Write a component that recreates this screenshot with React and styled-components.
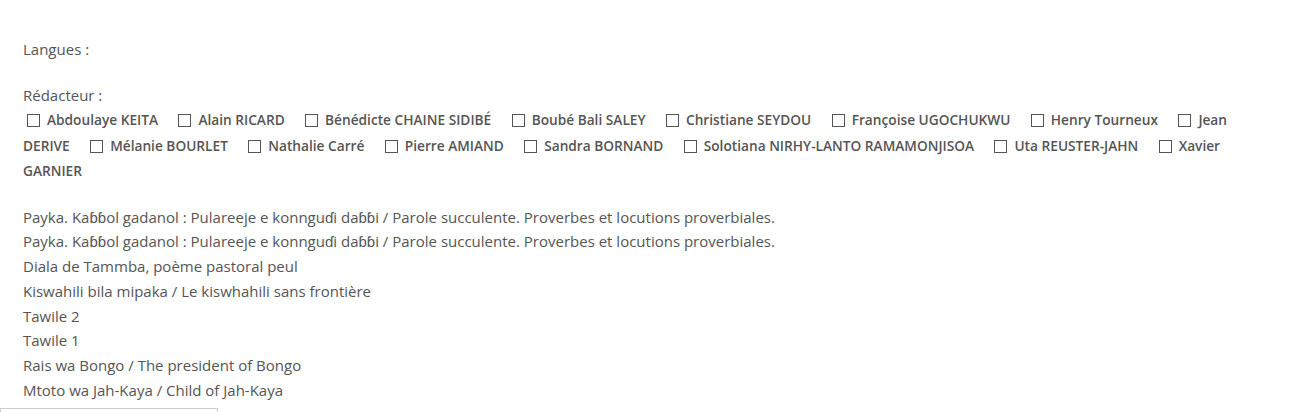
import styled, { createGlobalStyle } from "styled-components";

const GlobalStyle = createGlobalStyle`
  body {
    margin: 0;
    background: #fff;
    font-family: "Open Sans", "Liberation Sans", sans-serif;
    color: #555;
  }
`;

const Page = styled.div`
  padding: 37px 0 0 23px;
  width: 1250px;
`;

const Field = styled.div`
  margin-bottom: ${(props) => props.gap || "21px"};
`;

const Label = styled.div`
  font-size: 15px;
  line-height: 25px;
`;

const Authors = styled.div`
  margin-top: -1px;
  font-size: 13.7px;
  font-weight: 600;
  line-height: 25.5px;
`;

const Check = styled.input`
  width: 13px;
  height: 13px;
  margin: 0 7px 0 4px;
  vertical-align: -2px;
  appearance: none;
  border: 1px solid #555;
  background: #fff;
`;

const Author = styled.span`
  margin-right: 16.4px;
`;

const Titles = styled.div`
  font-size: 15px;
  line-height: 24.8px;
`;

const Title = styled.div``;

const Footer = styled.div`
  margin: 5px 0 0 -23px;
  width: 216px;
  height: 20px;
  border: 1px solid #ccc;
  border-bottom: none;
`;

const redacteurs = [
  "Abdoulaye KEITA",
  "Alain RICARD",
  "Bénédicte CHAINE SIDIBÉ",
  "Boubé Bali SALEY",
  "Christiane SEYDOU",
  "Françoise UGOCHUKWU",
  "Henry Tourneux",
  "Jean DERIVE",
  "Mélanie BOURLET",
  "Nathalie Carré",
  "Pierre AMIAND",
  "Sandra BORNAND",
  "Solotiana NIRHY-LANTO RAMAMONJISOA",
  "Uta REUSTER-JAHN",
  "Xavier GARNIER",
];

const titres = [
  "Payka. Kaɓɓol gadanol : Pulareeje e konnguɗi daɓɓi / Parole succulente. Proverbes et locutions proverbiales.",
  "Payka. Kaɓɓol gadanol : Pulareeje e konnguɗi daɓɓi / Parole succulente. Proverbes et locutions proverbiales.",
  "Diala de Tammba, poème pastoral peul",
  "Kiswahili bila mipaka / Le kiswhahili sans frontière",
  "Tawile 2",
  "Tawile 1",
  "Rais wa Bongo / The president of Bongo",
  "Mtoto wa Jah-Kaya / Child of Jah-Kaya",
];

const App = () => {
  return (
    <Page>
      <GlobalStyle />
      <Field>
        <Label>Langues :</Label>
      </Field>
      <Field gap="21px">
        <Label>Rédacteur :</Label>
        <Authors>
          {redacteurs.map((nom, i) => (
            <Author key={i}>
              <Check type="checkbox" />
              {nom}
            </Author>
          ))}
        </Authors>
      </Field>
      <Titles>
        {titres.map((titre, i) => (
          <Title key={i}>{titre}</Title>
        ))}
      </Titles>
      <Footer />
    </Page>
  );
};

export default App;
